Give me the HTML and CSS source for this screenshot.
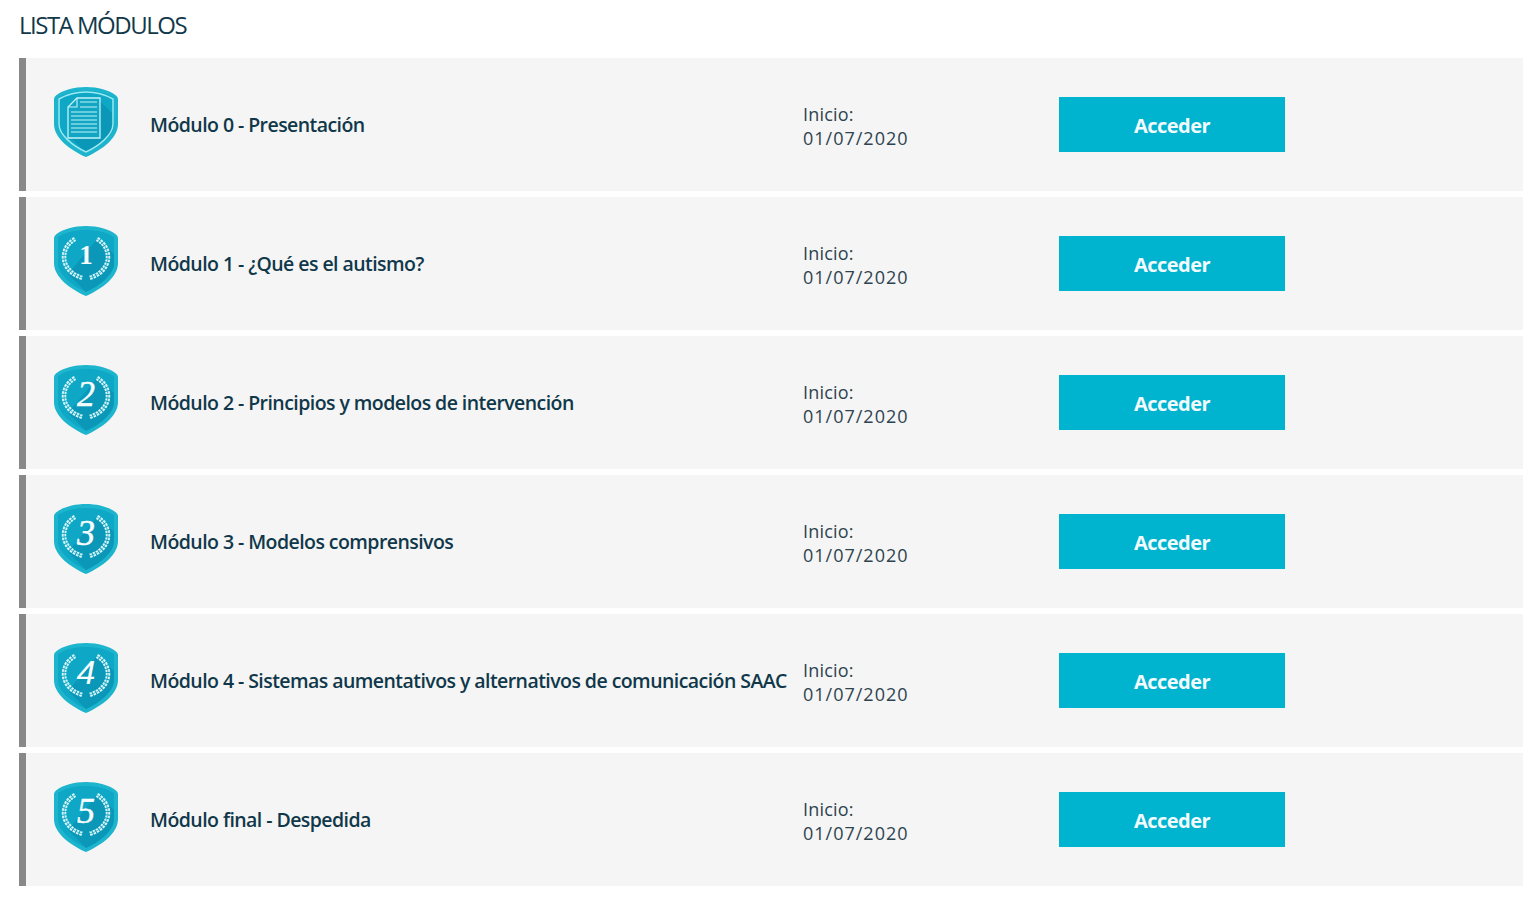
FILE: index.html
```html
<!DOCTYPE html>
<html lang="es">
<head>
<meta charset="utf-8">
<title>Lista módulos</title>
<link rel="stylesheet" href="styles.css">
</head>
<body>
<svg class="defs" width="0" height="0" aria-hidden="true">
  <defs>
    <symbol id="shield" viewBox="0 0 64 70">
      <path class="s-edge" d="M32 0C44 0 55 3 62 8.500Q64 10 64 12V37C64 51 48 63 32 70C16 63 0 51 0 37V12Q0 10 2 8.500C9 3 20 0 32 0Z"/>
      <path class="s-inner" d="M32 4C43 4 53 6.500 60 11V37C60 49 45 60 32 66C19 60 4 49 4 37V11C11 6.500 21 4 32 4Z"/>
      <path class="s-shade" d="M44 12L60 28V37C60 49 45 60 32 66L14 48Z"/>
    </symbol>
    <symbol id="laurel" viewBox="0 0 64 70">
      <path class="l-leaf" d="M21 13C12 18 8 28 11 37C14 45 21 50 29 52"/>
      <path class="l-leaf" d="M43 13C52 18 56 28 53 37C50 45 43 50 35 52"/>
      <path class="l-stem" d="M21 13C12 18 8 28 11 37C14 45 21 50 29 52M43 13C52 18 56 28 53 37C50 45 43 50 35 52"/>
    </symbol>
  </defs>
</svg>
<main class="page">
  <h1 class="title">LISTA MÓDULOS</h1>
  <ul class="list">
    <li class="row">
      <svg class="badge" viewBox="0 0 64 70" aria-hidden="true">
        <use href="#shield"/>
        <path class="s-ring" d="M32 5C42 5 51 7.500 59 12V37C59 48 45 59 32 65C19 59 5 48 5 37V12C13 7.500 22 5 32 5Z"/>
        <path class="d-page" d="M23 11H46V51H14V20Z"/>
        <path class="d-line" d="M23 11V20H14M26 15H43M26 20H43M17 25H43M17 29H43M17 33H43M17 37H43M17 41H43M17 45H43"/>
      </svg>
      <div class="name">Módulo 0 - Presentación</div>
      <div class="date"><div class="date-label">Inicio:</div><div class="date-value">01/07/2020</div></div>
      <a class="btn" href="#">Acceder</a>
    </li>
    <li class="row">
      <svg class="badge" viewBox="0 0 64 70" aria-hidden="true"><use href="#shield"/><use href="#laurel"/><text class="num num-bold" x="32" y="38">1</text></svg>
      <div class="name">Módulo 1 - ¿Qué es el autismo?</div>
      <div class="date"><div class="date-label">Inicio:</div><div class="date-value">01/07/2020</div></div>
      <a class="btn" href="#">Acceder</a>
    </li>
    <li class="row">
      <svg class="badge" viewBox="0 0 64 70" aria-hidden="true"><use href="#shield"/><use href="#laurel"/><text class="num num-italic" x="32" y="41">2</text></svg>
      <div class="name">Módulo 2 - Principios y modelos de intervención</div>
      <div class="date"><div class="date-label">Inicio:</div><div class="date-value">01/07/2020</div></div>
      <a class="btn" href="#">Acceder</a>
    </li>
    <li class="row">
      <svg class="badge" viewBox="0 0 64 70" aria-hidden="true"><use href="#shield"/><use href="#laurel"/><text class="num num-italic" x="32" y="41">3</text></svg>
      <div class="name">Módulo 3 - Modelos comprensivos</div>
      <div class="date"><div class="date-label">Inicio:</div><div class="date-value">01/07/2020</div></div>
      <a class="btn" href="#">Acceder</a>
    </li>
    <li class="row">
      <svg class="badge" viewBox="0 0 64 70" aria-hidden="true"><use href="#shield"/><use href="#laurel"/><text class="num num-sans" x="32" y="41">4</text></svg>
      <div class="name">Módulo 4 - Sistemas aumentativos y alternativos de comunicación SAAC</div>
      <div class="date"><div class="date-label">Inicio:</div><div class="date-value">01/07/2020</div></div>
      <a class="btn" href="#">Acceder</a>
    </li>
    <li class="row">
      <svg class="badge" viewBox="0 0 64 70" aria-hidden="true"><use href="#shield"/><use href="#laurel"/><text class="num num-italic" x="32" y="41">5</text></svg>
      <div class="name">Módulo final - Despedida</div>
      <div class="date"><div class="date-label">Inicio:</div><div class="date-value">01/07/2020</div></div>
      <a class="btn" href="#">Acceder</a>
    </li>
  </ul>
</main>
</body>
</html>
```
FILE: styles.css
```css
* { box-sizing: border-box; }
html, body { margin: 0; padding: 0; background: #fff; }
body { font-family: "Open Sans", "Noto Sans", sans-serif; color: #10384a; overflow: hidden; }
.defs { position: absolute; }
.page { padding: 0 13px 0 19px; }
.title {
  margin: 0;
  height: 58px;
  padding-top: 8px;
  font-size: 24px;
  line-height: 33px;
  font-weight: 400;
  letter-spacing: -1.500px;
  color: #12384a;
}
.list { list-style: none; margin: 0; padding: 0; display: flex; flex-direction: column; gap: 6px; }
.row {
  height: 133px;
  display: flex;
  align-items: center;
  background: #f5f5f5;
  border-left: 7px solid #888;
  padding-left: 28px;
}
.badge { width: 64px; height: 70px; margin-bottom: 6px; margin-right: 32px; flex: none; }
.name {
  width: 653px;
  flex: none;
  font-size: 19.500px;
  font-weight: 600;
  letter-spacing: -0.56px;
  color: #10384a;
  white-space: nowrap;
}
.date {
  width: 256px;
  flex: none;
  font-size: 18px;
  line-height: 24px;
  color: #2d4350;
  margin-top: 2px;
}
.date-label { letter-spacing: 0.2px; }
.date-value { letter-spacing: 1px; }
.btn {
  width: 226px;
  height: 55px;
  flex: none;
  display: flex;
  align-items: center;
  justify-content: center;
  padding-top: 1px;
  background: #00b3cf;
  color: #f2fbfd;
  font-size: 20px;
  font-weight: 700;
  text-decoration: none;
  letter-spacing: -0.5px;
}
.s-edge { fill: #1db4cd; }
.s-inner { fill: #0ea7c6; }
.s-shade { fill: #0b97b7; }
.s-ring { fill: none; stroke: #9beaf1; stroke-width: 1.500; }
.d-page { fill: #12a6c4; stroke: #c2f3f7; stroke-width: 1.300; }
.d-line { fill: none; stroke: #c2f3f7; stroke-width: 1.100; }
.l-leaf { fill: none; stroke: #d9f5f8; stroke-width: 4.500; stroke-dasharray: 2.500 1; }
.l-stem { fill: none; stroke: #0ea7c6; stroke-width: 0.700; }
.num { text-anchor: middle; fill: #f6fdfe; }
.num-bold { font-family: "Liberation Serif", serif; font-size: 27px; font-weight: 700; }
.num-italic { font-family: "Liberation Serif", serif; font-size: 36px; font-style: italic; stroke: #f6fdfe; stroke-width: 0.500; }
.num-sans { font-family: "Liberation Sans", sans-serif; font-size: 34px; font-style: italic; }
```
